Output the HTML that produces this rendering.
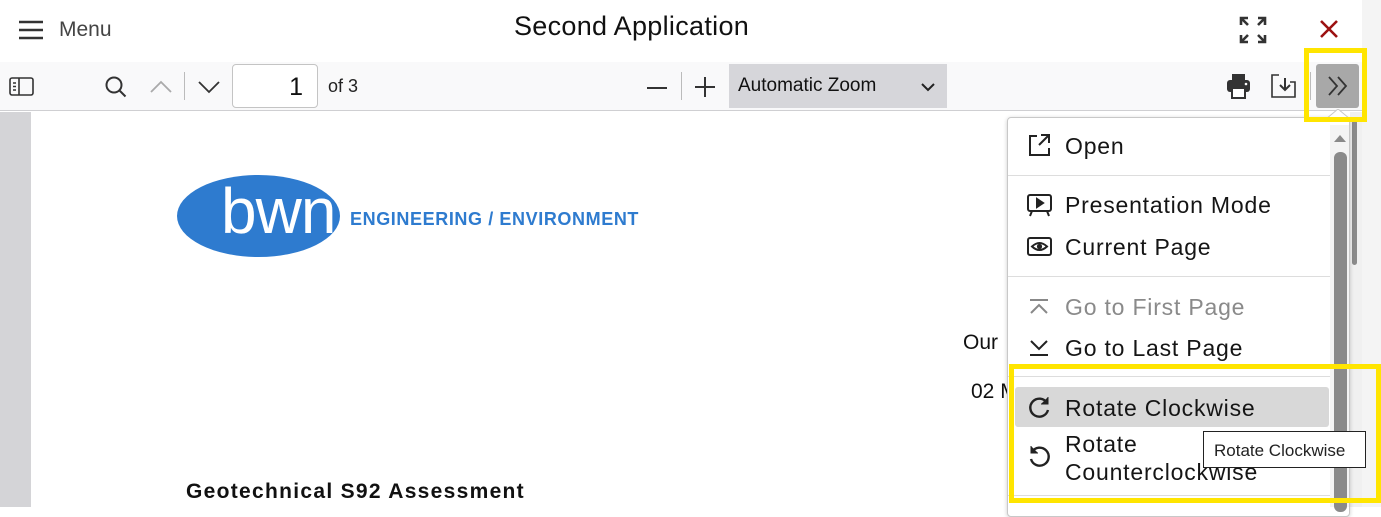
<!DOCTYPE html>
<html><head><meta charset="utf-8"><style>
*{margin:0;padding:0;box-sizing:border-box}
body{width:1381px;height:507px;overflow:hidden;background:#fff;font-family:"Liberation Sans",Arial,sans-serif;position:relative}
.abs{position:absolute}
.tb{left:0;top:62px;width:1362px;height:49px;background:#f9f9fa;border-bottom:1px solid #cfcfd2}
.mi{position:absolute;left:1065px;font-size:23px;color:#151515;white-space:nowrap;letter-spacing:.8px}
.ic{position:absolute;left:1027px}
.sep{position:absolute;left:1008px;width:322px;height:1px;background:#ddd}
</style></head><body>
<div class="abs" style="left:0;top:0;width:1362px;height:62px;background:#fff;border-top-right-radius:14px"></div>
<div class="abs" style="left:1362px;top:0;width:19px;height:507px;background:#f4f4f4"></div>
<svg class="abs" style="left:18px;top:19px" width="26" height="22"><path d="M1 3h24M1 11h24M1 19h24" stroke="#333" stroke-width="2.6"/></svg>
<div class="abs" style="left:59px;top:18px;font-size:21px;color:#444">Menu</div>
<div class="abs" style="left:514px;top:11px;font-size:27px;color:#111;letter-spacing:.3px">Second Application</div>
<svg class="abs" style="left:1239px;top:16px" width="28" height="28" fill="none" stroke="#333" stroke-width="2.6"><path d="M2 9V2h7M2 2l7 7M19 2h7v7M26 2l-7 7M2 19v7h7M2 26l7-7M26 19v7h-7M26 26l-7-7"/></svg>
<svg class="abs" style="left:1319px;top:19px" width="20" height="20"><path d="M2 2l16 16M18 2L2 18" stroke="#9c1111" stroke-width="2.6"/></svg>
<div class="abs tb"></div>
<svg class="abs" style="left:9px;top:77px" width="26" height="20" fill="none" stroke="#333" stroke-width="1.6"><rect x="1" y="1" width="23" height="17" rx="2"/><path d="M10 1v17M4 6h3M4 9.5h3M4 13h3"/></svg>
<svg class="abs" style="left:104px;top:75px" width="24" height="24" fill="none" stroke="#333" stroke-width="2"><circle cx="10" cy="10" r="7.5"/><path d="M15.5 15.5l6 6"/></svg>
<svg class="abs" style="left:150px;top:80px" width="22" height="14" fill="none" stroke="#aaa" stroke-width="1.8"><path d="M1 12l10-10 10 10"/></svg>
<div class="abs" style="left:184px;top:72px;width:1px;height:28px;background:#bbb"></div>
<svg class="abs" style="left:198px;top:80px" width="22" height="14" fill="none" stroke="#333" stroke-width="1.8"><path d="M1 2l10 10 10-10"/></svg>
<div class="abs" style="left:232px;top:64px;width:86px;height:44px;background:#fff;border:1px solid #c4c4c4;border-radius:4px;font-size:25px;text-align:right;padding:8px 14px 0 0;color:#111">1</div>
<div class="abs" style="left:328px;top:76px;font-size:18px;color:#222">of 3</div>
<svg class="abs" style="left:646px;top:86px" width="22" height="4"><path d="M1 2h20" stroke="#333" stroke-width="2"/></svg>
<div class="abs" style="left:681px;top:72px;width:1px;height:28px;background:#bbb"></div>
<svg class="abs" style="left:694px;top:76px" width="22" height="22"><path d="M1 11h20M11 1v20" stroke="#333" stroke-width="2"/></svg>
<div class="abs" style="left:729px;top:64px;width:218px;height:44px;background:#d6d6da"></div>
<div class="abs" style="left:738px;top:75px;font-size:19px;color:#111">Automatic Zoom</div>
<svg class="abs" style="left:921px;top:83px" width="14" height="9" fill="none" stroke="#222" stroke-width="2"><path d="M1 1l6 6 6-6"/></svg>
<svg class="abs" style="left:1226px;top:73px" width="25" height="26"><path d="M6 1h13v6H6z" fill="#333"/><rect x="1" y="7" width="23" height="12" rx="3" fill="#333"/><rect x="6" y="15" width="13" height="10" fill="#fff" stroke="#333" stroke-width="2"/><circle cx="20" cy="11" r="1.3" fill="#fff"/></svg>
<svg class="abs" style="left:1270px;top:74px" width="27" height="24" fill="none" stroke="#333" stroke-width="1.6"><path d="M9 1H2v22h23V8h-5"/><path d="M15 4v12M10 11l5 5 5-5" stroke-width="2"/></svg>
<div class="abs" style="left:1310px;top:72px;width:1px;height:28px;background:#bbb"></div>
<div class="abs" style="left:1316px;top:64px;width:43px;height:44px;background:#a8a8a8;border-radius:3px"></div>
<svg class="abs" style="left:1327px;top:76px" width="22" height="20" fill="none" stroke="#333" stroke-width="1.8"><path d="M2 1l8 9-8 9M11 1l8 9-8 9"/></svg>
<div class="abs" style="left:0;top:112px;width:31px;height:395px;background:#d4d4d7"></div>
<div class="abs" style="left:1350px;top:112px;width:12px;height:395px;background:#f0f0f0"></div>
<div class="abs" style="left:1352px;top:120px;width:5px;height:145px;background:#8a8a8a;border-radius:3px"></div>
<div class="abs" style="left:177px;top:175px;width:163px;height:82px;border-radius:50%;background:#2e7bcf"></div>
<div class="abs" style="left:221px;top:174px;font-size:64px;color:#fff;letter-spacing:-1px">bwn</div>
<div class="abs" style="left:350px;top:209px;font-size:18px;font-weight:bold;color:#2e7bcf;letter-spacing:.6px">ENGINEERING / ENVIRONMENT</div>
<div class="abs" style="left:963px;top:331px;font-size:21px;color:#111">Our</div>
<div class="abs" style="left:971px;top:380px;font-size:21px;color:#111">02 M</div>
<div class="abs" style="left:186px;top:480px;font-size:21px;font-weight:bold;color:#111;letter-spacing:1.3px">Geotechnical S92 Assessment</div>
<div class="abs" style="left:1007px;top:117px;width:343px;height:400px;background:#fff;border:1px solid #c8c8c8;border-radius:4px;box-shadow:0 1px 4px rgba(0,0,0,.2)"></div>
<svg class="abs" style="left:1326px;top:109px" width="24" height="10"><path d="M0 10L12 0l12 10" fill="#fff" stroke="#c8c8c8"/></svg>
<div class="abs" style="left:1330px;top:125px;width:19px;height:382px;background:#f4f4f4"></div>
<svg class="abs" style="left:1334px;top:133px" width="12" height="10"><path d="M0 9L6 2l6 7z" fill="#8a8a8a"/></svg>
<div class="abs" style="left:1334px;top:152px;width:13px;height:360px;background:#8a8a8a;border-radius:6px"></div>
<svg class="ic" style="top:133px" width="25" height="25" fill="none" stroke="#222" stroke-width="2"><path d="M10 3H3v19h19v-7"/><path d="M14 2h8v8M22 2L12 12"/></svg>
<div class="mi" style="top:133px">Open</div>
<div class="sep" style="top:175px"></div>
<svg class="ic" style="top:193px" width="25" height="25" fill="none" stroke="#222" stroke-width="2"><rect x="1" y="2" width="23" height="16" rx="2"/><path d="M10 6v8l6-4z" fill="#222"/><path d="M5 18l-2 5M20 18l2 5"/></svg>
<div class="mi" style="top:192px">Presentation Mode</div>
<svg class="ic" style="top:237px" width="25" height="20" fill="none" stroke="#222" stroke-width="2"><rect x="1" y="1" width="23" height="17" rx="2"/><path d="M5 9.5q7.5-7 15 0q-7.5 7-15 0z"/><circle cx="12.5" cy="9.5" r="1.6" fill="#222"/></svg>
<div class="mi" style="top:234px">Current Page</div>
<div class="sep" style="top:276px"></div>
<svg class="ic" style="top:298px" width="24" height="18" fill="none" stroke="#888" stroke-width="2"><path d="M3 2h18M4 15l8-8 8 8"/></svg>
<div class="mi" style="top:294px;color:#8a8a8a">Go to First Page</div>
<svg class="ic" style="top:339px" width="24" height="18" fill="none" stroke="#222" stroke-width="2"><path d="M4 2l8 8 8-8M3 16h18"/></svg>
<div class="mi" style="top:335px">Go to Last Page</div>
<div class="sep" style="top:376px"></div>
<div class="abs" style="left:1015px;top:387px;width:314px;height:40px;background:#d8d8d8;border-radius:3px"></div>
<svg class="ic" style="top:395px" width="25" height="25" fill="none" stroke="#222" stroke-width="2.4"><path d="M20 8A9 9 0 1 0 21 15"/><path d="M21 2v7h-7" fill="#222" stroke-width="1"/></svg>
<div class="mi" style="top:395px">Rotate Clockwise</div>
<svg class="ic" style="top:444px" width="25" height="25" fill="none" stroke="#222" stroke-width="2.4"><path d="M5 8A9 9 0 1 1 4 15"/><path d="M4 2v7h7" fill="#222" stroke-width="1"/></svg>
<div class="mi" style="top:430px;line-height:28px">Rotate<br>Counterclockwise</div>
<div class="sep" style="top:495px"></div>
<div class="abs" style="left:1203px;top:431px;width:163px;height:37px;background:#fff;border:1px solid #222;font-size:17px;color:#222;padding:9px 0 0 10px;white-space:nowrap">Rotate Clockwise</div>
<div class="abs" style="left:1304px;top:48px;width:63px;height:74px;border:5px solid #ffe500"></div>
<div class="abs" style="left:1009px;top:364px;width:372px;height:139px;border:5px solid #ffe500"></div>
</body></html>
